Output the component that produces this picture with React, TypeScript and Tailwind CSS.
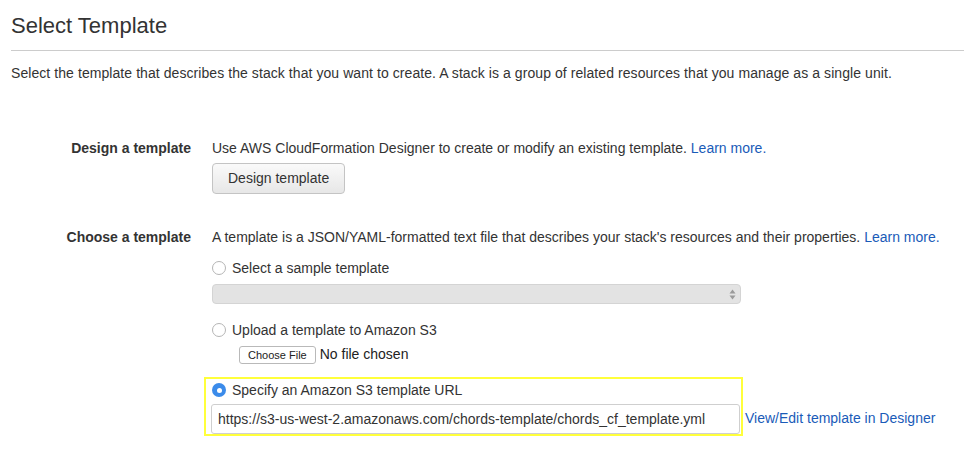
import React from 'react';

// ─── Radio button ─────────────────────────────────────────────────────────────
function Radio({ checked = false }: { checked?: boolean }) {
	if (checked) {
		return (
			<span className="w-[14px] h-[14px] rounded-full bg-[#3b8bea] flex items-center justify-center shrink-0">
				<span className="w-[5px] h-[5px] rounded-full bg-white" />
			</span>
		);
	}
	return <span className="w-[14px] h-[14px] rounded-full border border-[#b5b5b5] bg-white shrink-0" />;
}

// ─── Form row: label column + content column ──────────────────────────────────
function Row({ label, children }: { label: string; children: React.ReactNode }) {
	return (
		<div className="flex">
			<div className="w-[191px] shrink-0 text-right font-bold text-[#333] leading-[20px]">{label}</div>
			<div className="pl-[21px] flex flex-col">{children}</div>
		</div>
	);
}

export default function App() {
	return (
		<div
			className="w-[964px] h-[453px] bg-white text-[14px] text-[#333] overflow-hidden"
			style={{ fontFamily: '"Liberation Sans", Arial, sans-serif' }}
		>
			{/* Page header */}
			<div className="pl-[11px] pt-[12px]">
				<h1 className="text-[22px] leading-[28px] text-[#333]">Select Template</h1>
				<div className="mt-[10px] border-t border-[#cccccc]" />
				<p className="mt-[13px] leading-[18px] tracking-[0.07px]">
					Select the template that describes the stack that you want to create. A stack is a group of
					related resources that you manage as a single unit.
				</p>
			</div>

			<div className="mt-[56px] flex flex-col gap-[33px]">
				{/* Design a template */}
				<Row label="Design a template">
					<div className="leading-[20px]">
						Use AWS CloudFormation Designer to create or modify an existing template.{' '}
						<a className="text-[#1a5bb8]">Learn more.</a>
					</div>
					<button className="mt-[5px] self-start h-[31px] px-[15px] rounded-[4px] border border-[#c4c4c4] bg-gradient-to-b from-[#fafafa] to-[#e7e7e7] text-[#333] text-[14px]">
						Design template
					</button>
				</Row>

				{/* Choose a template */}
				<Row label="Choose a template">
					<div className="leading-[20px]">
						A template is a JSON/YAML-formatted text file that describes your stack's resources and their
						properties. <a className="text-[#1a5bb8]">Learn more.</a>
					</div>

					<label className="mt-[11px] flex items-center gap-[6px] leading-[20px]">
						<Radio />
						Select a sample template
					</label>
					<div className="mt-[6px] w-[529px] h-[20px] rounded-[4px] border border-[#d4d4d4] bg-[#e3e3e3] flex items-center justify-end pr-[4px]">
						<svg width="7" height="11" viewBox="0 0 7 11">
							<path d="M3.5 0.5 L6.5 4.5 H0.5 Z" fill="#9a9a9a" />
							<path d="M3.5 10.5 L6.5 6.5 H0.5 Z" fill="#9a9a9a" />
						</svg>
					</div>

					<label className="mt-[16px] flex items-center gap-[6px] leading-[20px]">
						<Radio />
						Upload a template to Amazon S3
					</label>
					<div className="mt-[4px] ml-[27px] flex items-center gap-[4px]">
						<button className="h-[18px] px-[8px] rounded-[3px] border border-[#b9b9b9] bg-white text-[11px] text-[#222] leading-[16px]">
							Choose File
						</button>
						<span className="text-[#222]">No file chosen</span>
					</div>

					{/* Highlighted option */}
					<div className="mt-[12px] -ml-[8px] w-[539px] border-2 border-[#ffff3b] pl-[5px] pr-[1px] pt-[1px]">
						<label className="flex items-center gap-[6px] leading-[20px] pl-[1px]">
							<Radio checked />
							Specify an Amazon S3 template URL
						</label>
						<div className="mt-[4px] h-[30px] rounded-[3px] border border-[#cfcfcf] bg-white flex items-center px-[6px] text-[#333]">
							https://s3-us-west-2.amazonaws.com/chords-template/chords_cf_template.yml
						</div>
					</div>
				</Row>
			</div>

			{/* Designer link beside the highlighted box */}
			<div className="-mt-[28px] ml-[745px] leading-[20px]">
				<a className="text-[#1a5bb8]">View/Edit template in Designer</a>
			</div>
		</div>
	);
}
